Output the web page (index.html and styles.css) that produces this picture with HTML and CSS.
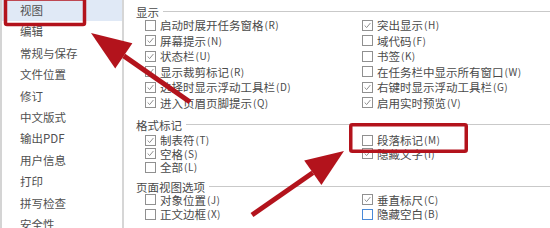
FILE: index.html
```html
<!DOCTYPE html>
<html lang="zh-CN">
<head>
<meta charset="utf-8">
<title>选项 - 视图</title>
<link rel="stylesheet" href="styles.css">
</head>
<body>
<div class="window">
  <nav class="sidebar">
    <div class="item selected">视图</div>
    <div class="item">编辑</div>
    <div class="item">常规与保存</div>
    <div class="item">文件位置</div>
    <div class="item">修订</div>
    <div class="item">中文版式</div>
    <div class="item">输出PDF</div>
    <div class="item">用户信息</div>
    <div class="item">打印</div>
    <div class="item">拼写检查</div>
    <div class="item">安全性</div>
  </nav>
  <main class="content">
    <div class="group-title g1"><span>显示</span></div>
    <div class="grid rows-a">
      <label class="opt"><i class="cb"></i>启动时展开任务窗格<span class="key">(R)</span></label>
      <label class="opt"><i class="cb on"><svg viewBox="0 0 11 11"><polyline points="2,5.5 4.5,8 9,2.5"/></svg></i>突出显示<span class="key">(H)</span></label>
      <label class="opt"><i class="cb on"><svg viewBox="0 0 11 11"><polyline points="2,5.5 4.5,8 9,2.5"/></svg></i>屏幕提示<span class="key">(N)</span></label>
      <label class="opt"><i class="cb"></i>域代码<span class="key">(F)</span></label>
      <label class="opt"><i class="cb on"><svg viewBox="0 0 11 11"><polyline points="2,5.5 4.5,8 9,2.5"/></svg></i>状态栏<span class="key">(U)</span></label>
      <label class="opt"><i class="cb"></i>书签<span class="key">(K)</span></label>
      <label class="opt"><i class="cb on"><svg viewBox="0 0 11 11"><polyline points="2,5.5 4.5,8 9,2.5"/></svg></i>显示裁剪标记<span class="key">(R)</span></label>
      <label class="opt"><i class="cb"></i>在任务栏中显示所有窗口<span class="key">(W)</span></label>
      <label class="opt"><i class="cb on"><svg viewBox="0 0 11 11"><polyline points="2,5.5 4.5,8 9,2.5"/></svg></i>选择时显示浮动工具栏<span class="key">(D)</span></label>
      <label class="opt"><i class="cb on"><svg viewBox="0 0 11 11"><polyline points="2,5.5 4.5,8 9,2.5"/></svg></i>右键时显示浮动工具栏<span class="key">(G)</span></label>
      <label class="opt"><i class="cb on"><svg viewBox="0 0 11 11"><polyline points="2,5.5 4.5,8 9,2.5"/></svg></i>进入页眉页脚提示<span class="key">(Q)</span></label>
      <label class="opt"><i class="cb on"><svg viewBox="0 0 11 11"><polyline points="2,5.5 4.5,8 9,2.5"/></svg></i>启用实时预览<span class="key">(V)</span></label>
    </div>
    <div class="group-title g2"><span>格式标记</span></div>
    <div class="grid rows-b">
      <label class="opt"><i class="cb on"><svg viewBox="0 0 11 11"><polyline points="2,5.5 4.5,8 9,2.5"/></svg></i>制表符<span class="key">(T)</span></label>
      <label class="opt"><i class="cb"></i>段落标记<span class="key">(M)</span></label>
      <label class="opt"><i class="cb on"><svg viewBox="0 0 11 11"><polyline points="2,5.5 4.5,8 9,2.5"/></svg></i>空格<span class="key">(S)</span></label>
      <label class="opt"><i class="cb on"><svg viewBox="0 0 11 11"><polyline points="2,5.5 4.5,8 9,2.5"/></svg></i>隐藏文字<span class="key">(I)</span></label>
      <label class="opt"><i class="cb"></i>全部<span class="key">(L)</span></label>
    </div>
    <div class="group-title g3"><span>页面视图选项</span></div>
    <div class="grid rows-c">
      <label class="opt"><i class="cb"></i>对象位置<span class="key">(J)</span></label>
      <label class="opt"><i class="cb on"><svg viewBox="0 0 11 11"><polyline points="2,5.5 4.5,8 9,2.5"/></svg></i>垂直标尺<span class="key">(C)</span></label>
      <label class="opt"><i class="cb"></i>正文边框<span class="key">(X)</span></label>
      <label class="opt"><i class="cb focus"></i>隐藏空白<span class="key">(B)</span></label>
    </div>
  </main>
</div>
<svg class="annot" viewBox="0 0 550 228" width="550" height="228">
  <rect x="5.5" y="-1" width="79" height="25.5" rx="1.5" class="box"/>
  <rect x="350.75" y="124.75" width="115.5" height="26.5" rx="1.5" class="box"/>
  <line x1="190" y1="102" x2="123.8" y2="55.9" class="shaft"/>
  <polygon points="91,33 132.4,43.3 115.2,68.5" class="head"/>
  <line x1="252" y1="215" x2="312.8" y2="172.7" class="shaft"/>
  <polygon points="344,151 321.4,185 304.2,160.4" class="head"/>
</svg>
</body>
</html>
```

FILE: styles.css
```css
html, body {
  margin: 0;
  padding: 0;
  background: #ffffff;
}
body {
  width: 550px;
  height: 228px;
  overflow: hidden;
  position: relative;
  font-family: "Noto Sans CJK SC", "Noto Sans", sans-serif;
  font-size: 11.5px;
  color: #4a4a4a;
}
.window {
  display: flex;
  height: 228px;
}
.sidebar {
  box-sizing: border-box;
  width: 124px;
  flex: none;
  border-left: 2px solid #d4d4d4;
  border-right: 2px solid #d6d6d6;
  display: flex;
  flex-direction: column;
}
.item {
  height: 21.4px;
  line-height: 21.4px;
  padding-left: 18px;
  color: #505050;
  white-space: nowrap;
  flex: none;
}
.item.selected {
  background: #e0e9f6;
}
.content {
  flex: 1;
  display: flex;
  flex-direction: column;
  min-width: 0;
}
.group-title {
  display: flex;
  align-items: center;
  height: 12px;
  line-height: 12px;
  padding-left: 12px;
  color: #4a4a4a;
  white-space: nowrap;
}
.group-title::after {
  content: "";
  flex: 1;
  height: 1px;
  background: #c9c9c9;
  margin-left: 4px;
}
.g1 { margin-top: 5.5px; }
.g2 { margin-top: 8px; }
.g3 { margin-top: 6.5px; }
.grid {
  display: grid;
  grid-template-columns: 217px 1fr;
  padding-left: 21px;
}
.rows-a { grid-auto-rows: 15.5px; }
.rows-b { grid-auto-rows: 13.5px; padding-top: 3px; }
.rows-c { grid-auto-rows: 14.5px; }
.opt {
  display: flex;
  align-items: center;
  line-height: 12px;
  white-space: nowrap;
  color: #4a4a4a;
}
.cb {
  box-sizing: border-box;
  width: 11px;
  height: 11px;
  border: 1px solid #909090;
  background: #ffffff;
  margin-right: 4px;
  flex: none;
  display: block;
}
.cb svg {
  display: block;
  width: 9px;
  height: 9px;
}
.cb svg polyline {
  fill: none;
  stroke: #767676;
  stroke-width: 1;
}
.cb.focus {
  border-color: #4a8ad8;
}
.key {
  font-size: 10px;
  letter-spacing: 0.5px;
  margin-left: 1px;
}
.annot {
  position: absolute;
  left: 0;
  top: 0;
  pointer-events: none;
}
.box {
  fill: none;
  stroke: #b3131c;
  stroke-width: 3.5;
}
.shaft {
  stroke: #b3131c;
  stroke-width: 5;
}
.head {
  fill: #b3131c;
}
```
